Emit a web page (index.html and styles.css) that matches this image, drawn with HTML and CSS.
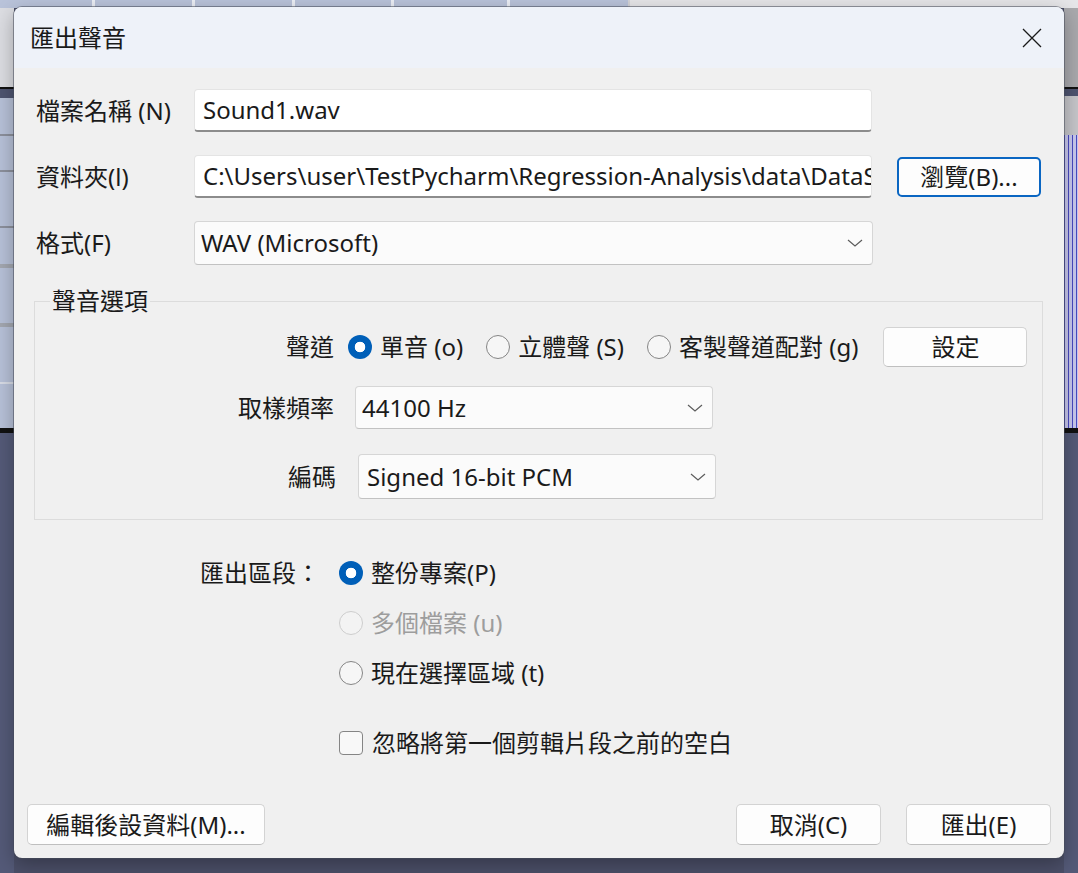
FILE: index.html
```html
<!DOCTYPE html>
<html lang="zh-Hant">
<head>
<meta charset="utf-8">
<title>匯出聲音</title>
<link rel="stylesheet" href="styles.css">
</head>
<body>
<div class="desktop">
  <div class="dialog">
    <header class="titlebar">
      <span class="title">匯出聲音</span>
      <svg class="close" viewBox="0 0 20 20" aria-hidden="true"><path d="M1 1L19 19M19 1L1 19"/></svg>
    </header>
    <main class="content">
      <div class="file-rows">
        <div class="frow">
          <span class="flabel">檔案名稱 (N)</span>
          <div class="textbox">Sound1.wav</div>
        </div>
        <div class="frow">
          <span class="flabel">資料夾(l)</span>
          <div class="textbox textbox-path">C:\Users\user\TestPycharm\Regression-Analysis\data\DataSet</div>
          <button class="btn btn-browse">瀏覽(B)...</button>
        </div>
        <div class="frow">
          <span class="flabel">格式(F)</span>
          <div class="select select-format"><span>WAV (Microsoft)</span><svg class="chev" viewBox="0 0 16 8" aria-hidden="true"><path d="M1 1L8 7L15 1"/></svg></div>
        </div>
      </div>

      <fieldset class="group">
        <legend>聲音選項</legend>
        <div class="grow grow-channels">
          <span class="glabel">聲道</span>
          <label class="opt"><span class="radio radio-on"></span>單音 (o)</label>
          <label class="opt"><span class="radio"></span>立體聲 (S)</label>
          <label class="opt"><span class="radio"></span>客製聲道配對 (g)</label>
          <button class="btn btn-setup">設定</button>
        </div>
        <div class="grow grow-rate">
          <span class="glabel">取樣頻率</span>
          <div class="select select-rate"><span>44100 Hz</span><svg class="chev" viewBox="0 0 16 8" aria-hidden="true"><path d="M1 1L8 7L15 1"/></svg></div>
        </div>
        <div class="grow grow-enc">
          <span class="glabel glabel-enc">編碼</span>
          <div class="select select-enc"><span>Signed 16-bit PCM</span><svg class="chev" viewBox="0 0 16 8" aria-hidden="true"><path d="M1 1L8 7L15 1"/></svg></div>
        </div>
      </fieldset>

      <div class="range">
        <span class="range-label">匯出區段：</span>
        <div class="range-opts">
          <label class="opt"><span class="radio radio-on"></span>整份專案(P)</label>
          <label class="opt opt-disabled"><span class="radio radio-disabled"></span>多個檔案 (u)</label>
          <label class="opt"><span class="radio"></span>現在選擇區域 (t)</label>
          <label class="opt opt-check"><span class="checkbox"></span>忽略將第一個剪輯片段之前的空白</label>
        </div>
      </div>

      <footer class="footer">
        <button class="btn btn-meta">編輯後設資料(M)...</button>
        <div class="footer-right">
          <button class="btn btn-std">取消(C)</button>
          <button class="btn btn-std">匯出(E)</button>
        </div>
      </footer>
    </main>
  </div>
</div>
</body>
</html>
```

FILE: styles.css
```css
* { box-sizing: border-box; }

html, body {
  margin: 0;
  height: 100%;
}

body {
  font-family: "Noto Sans", "Noto Sans CJK TC", sans-serif;
  font-size: 24px;
  line-height: 30px;
  color: #1a1a1a;
  overflow: hidden;
  background:
    /* top toolbar strip */
    linear-gradient(to right,
      #b9c3da 0 92px, #eceff6 92px 95px,
      #b9c3da 95px 192px, #eceff6 192px 195px,
      #b9c3da 195px 292px, #eceff6 292px 295px,
      #b9c3da 295px 391px, #eceff6 391px 394px,
      #b9c3da 394px 507px, #eceff6 507px 510px,
      #b9c3da 510px 628px, #d4d4d8 628px 630px,
      #e6e6e9 630px) 0 0 / 100% 8px no-repeat,
    /* left strip */
    linear-gradient(to bottom,
      #dcdde2 0 87px, #111 87px 89px, #4e5470 89px 98px,
      #b7c1d8 98px 134px, #8c909c 134px 136px,
      #b7c1d8 136px 170px, #8c909c 170px 172px,
      #b7c1d8 172px 226px, #8c909c 226px 228px,
      #b7c1d8 228px 264px, #a3a7b0 264px 268px,
      #b7c1d8 268px 323px, #a3a7b0 323px 327px,
      #b7c1d8 327px 382px, #d8dce6 382px 384px,
      #b7c1d8 384px 428px, #111 428px 433px,
      #545a78 433px) 0 0 / 14px 100% no-repeat,
    /* right strip stripes */
    repeating-linear-gradient(to right, #4a4ac2 0 1px, #cacaf0 1px 4px) right 0 top 135px / 14px 293px no-repeat,
    /* right strip */
    linear-gradient(to bottom,
      #a9a9ad 0 87px, #111 87px 89px, #4e5470 89px 96px,
      #c6c6ca 96px 135px, transparent 135px 428px,
      #111 428px 433px, #545a78 433px) right 0 top 0 / 14px 100% no-repeat,
    #4b4f68;
}

.desktop {
  padding: 7px 0 0 14px;
}

.dialog {
  width: 1050px;
  height: 851px;
  border-radius: 8px;
  background: #f0f0f0;
  display: flex;
  flex-direction: column;
  overflow: hidden;
  box-shadow: 0 0 0 1px rgba(70, 74, 90, 0.55), 0 6px 20px rgba(0, 0, 0, 0.3);
}

/* ---------- title bar ---------- */
.titlebar {
  height: 61px;
  flex: none;
  background: #eef2f9;
  display: flex;
  align-items: center;
  justify-content: space-between;
  padding: 0 22px 0 16px;
}

.title {
  font-size: 24px;
}

.close {
  width: 20px;
  height: 20px;
  fill: none;
  stroke: #1a1a1a;
  stroke-width: 1.3;
}

/* ---------- content ---------- */
.content {
  flex: 1;
  display: flex;
  flex-direction: column;
  padding: 0 13px 13px 13px;
}

.file-rows {
  display: flex;
  flex-direction: column;
  gap: 23px;
  margin: 21px 0 0 9px;
}

.frow {
  display: flex;
  align-items: center;
}

.flabel {
  width: 158px;
  flex: none;
  white-space: nowrap;
}

.textbox {
  width: 678px;
  height: 43px;
  flex: none;
  background: #ffffff;
  border: 1px solid #e4e4e4;
  border-bottom: 2px solid #8c8c8c;
  border-radius: 4px;
  padding: 0 8px;
  display: flex;
  align-items: center;
  white-space: nowrap;
  overflow: hidden;
}

.select {
  height: 44px;
  flex: none;
  background: #fbfbfb;
  border: 1px solid #d6d6d6;
  border-bottom-color: #c2c2c2;
  border-radius: 4px;
  display: flex;
  align-items: center;
  justify-content: space-between;
  padding: 0 9px 0 6px;
  white-space: nowrap;
}

.select-format { width: 679px; }

.chev {
  width: 16px;
  height: 8px;
  fill: none;
  stroke: #5c5c5c;
  stroke-width: 1.2;
}

.btn {
  font-family: inherit;
  font-size: 24px;
  line-height: 30px;
  color: #1a1a1a;
  background: #fdfdfd;
  border: 1px solid #d3d3d3;
  border-bottom-color: #bfbfbf;
  border-radius: 5px;
  padding: 0;
  display: flex;
  align-items: center;
  justify-content: center;
}

.btn-browse {
  width: 144px;
  height: 40px;
  margin-left: 25px;
  border: 2px solid #0a66c2;
}

/* ---------- group box ---------- */
.group {
  margin: 21px 0 0 7px;
  width: 1009px;
  border: 1px solid #dcdcdc;
  padding: 11px 0 20px 0;
  min-width: 0;
}

.group legend {
  margin-left: 15px;
  padding: 0 2px;
  line-height: 30px;
}

.grow {
  display: flex;
  align-items: center;
}

.grow-channels { height: 40px; }
.grow-rate { height: 43px; margin-top: 19px; }
.grow-enc { height: 45px; margin-top: 25px; }

.glabel {
  width: 299px;
  flex: none;
  text-align: right;
  margin-right: 14px;
}

.grow-rate .glabel { margin-right: 21px; }
.glabel-enc { width: 301px; margin-right: 22px; }

.select-rate { width: 358px; height: 43px; padding-left: 6px; }
.select-enc { width: 358px; height: 45px; padding-left: 8px; }

.opt {
  display: flex;
  align-items: center;
  gap: 8px;
  white-space: nowrap;
  height: 30px;
}

.grow-channels .opt + .opt { margin-left: 23px; }

.radio {
  width: 24px;
  height: 24px;
  flex: none;
  border-radius: 50%;
  border: 1.5px solid #858585;
  background: #f6f6f6;
}

.radio-on {
  border: none;
  background: radial-gradient(circle, #ffffff 0 5px, #005fb8 5.6px);
}

.radio-disabled {
  border-color: #cdcdcd;
  background: #f3f3f3;
}

.opt-disabled { color: #9d9d9d; }

.btn-setup {
  width: 144px;
  height: 40px;
  margin-left: 25px;
}

/* ---------- export range ---------- */
.range {
  display: flex;
  align-items: flex-start;
  margin-top: 38px;
}

.range-label {
  margin-left: 173px;
  width: 120px;
  margin-right: 19px;
  line-height: 30px;
  white-space: nowrap;
}

.range-opts {
  display: flex;
  flex-direction: column;
  gap: 20px;
}

.opt-check {
  margin-top: 20px;
  gap: 9px;
}

.checkbox {
  width: 24px;
  height: 24px;
  flex: none;
  border: 1.5px solid #858585;
  border-radius: 4px;
  background: #f8f8f8;
}

/* ---------- footer ---------- */
.footer {
  margin-top: auto;
  display: flex;
  justify-content: space-between;
  align-items: center;
}

.footer .btn { height: 41px; }

.btn-meta { width: 238px; }

.footer-right {
  display: flex;
  gap: 25px;
}

.btn-std { width: 145px; }
```
